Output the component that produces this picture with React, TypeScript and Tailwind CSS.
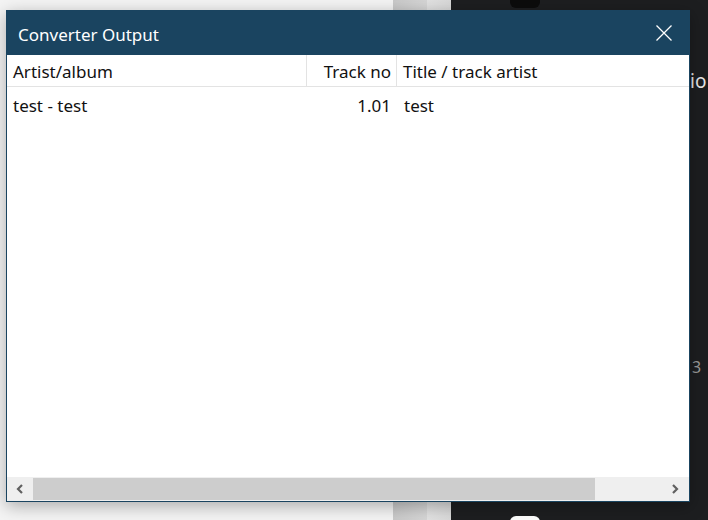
export default function App() {
  const font = { fontFamily: '"Noto Sans", "Open Sans", sans-serif' };

  return (
    <div className="relative w-[708px] h-[520px] overflow-hidden flex" style={font}>
      {/* Backdrop: app behind the dialog */}
      <div className="w-[393px] h-full bg-[#f4f4f4]" />
      <div className="w-[34px] h-full bg-gradient-to-r from-[#c9c9c9] to-[#d6d6d6]" />
      <div className="w-[24px] h-full bg-gradient-to-r from-[#e2e2e2] to-[#d9d9d9]" />
      <div className="relative flex-1 h-full bg-[#1d1e20]">
        <div className="absolute left-[59px] top-[-6px] w-[30px] h-[14px] rounded-md bg-[#0c0c0c]" />
        <div className="absolute left-[59px] top-[516px] w-[30px] h-[14px] rounded-md bg-white" />
        <span className="absolute left-[239px] top-[72px] text-[19px] text-[#e6e6e6] leading-none">io</span>
        <span className="absolute left-[241px] top-[359px] text-[16px] text-[#9a9a9a] leading-none">3</span>
      </div>

      {/* Dialog */}
      <div className="absolute left-[6px] top-[10px] w-[684px] h-[492px] flex flex-col bg-white border border-[#1a4460] shadow-[0_4px_16px_rgba(0,0,0,0.3)]">
        <div className="h-[44px] shrink-0 bg-[#1a4460] flex items-center justify-between pl-[11px] pr-[16px]">
          <span className="text-white text-[17px] pt-[3px]">Converter Output</span>
          <svg width="18" height="18" viewBox="0 0 18 18" fill="none" stroke="white" strokeWidth="1.3">
            <path d="M1.5 1.5 L16.5 16.5 M16.5 1.5 L1.5 16.5" />
          </svg>
        </div>

        <div className="flex-1 flex flex-col text-[17px] text-[#111]">
          <div className="flex h-[32px] border-b border-[#e3e3e3]">
            <div className="w-[300px] border-r border-[#e3e3e3] pl-[6px] pt-[3px] flex items-center">Artist/album</div>
            <div className="w-[90px] border-r border-[#e3e3e3] pr-[5px] pt-[3px] flex items-center justify-end">Track no</div>
            <div className="flex-1 pl-[6px] pt-[3px] flex items-center">Title / track artist</div>
          </div>
          <div className="flex h-[34px] pt-[3px]">
            <div className="w-[300px] pl-[6px] flex items-center">test - test</div>
            <div className="w-[90px] pr-[6px] flex items-center justify-end">1.01</div>
            <div className="flex-1 pl-[7px] flex items-center">test</div>
          </div>
          <div className="flex-1" />
        </div>

        <div className="h-[24px] shrink-0 flex bg-[#efefef]">
          <div className="w-[26px] flex items-center justify-center">
            <svg width="10" height="12" viewBox="0 0 10 12" fill="none" stroke="#606060" strokeWidth="2.2">
              <path d="M7 2 L3 6 L7 10" />
            </svg>
          </div>
          <div className="w-[562px] my-[1px] bg-[#cdcdcd]" />
          <div className="flex-1 flex items-center justify-end pr-[9px]">
            <svg width="10" height="12" viewBox="0 0 10 12" fill="none" stroke="#606060" strokeWidth="2.2">
              <path d="M3 2 L7 6 L3 10" />
            </svg>
          </div>
        </div>
      </div>
    </div>
  );
}
